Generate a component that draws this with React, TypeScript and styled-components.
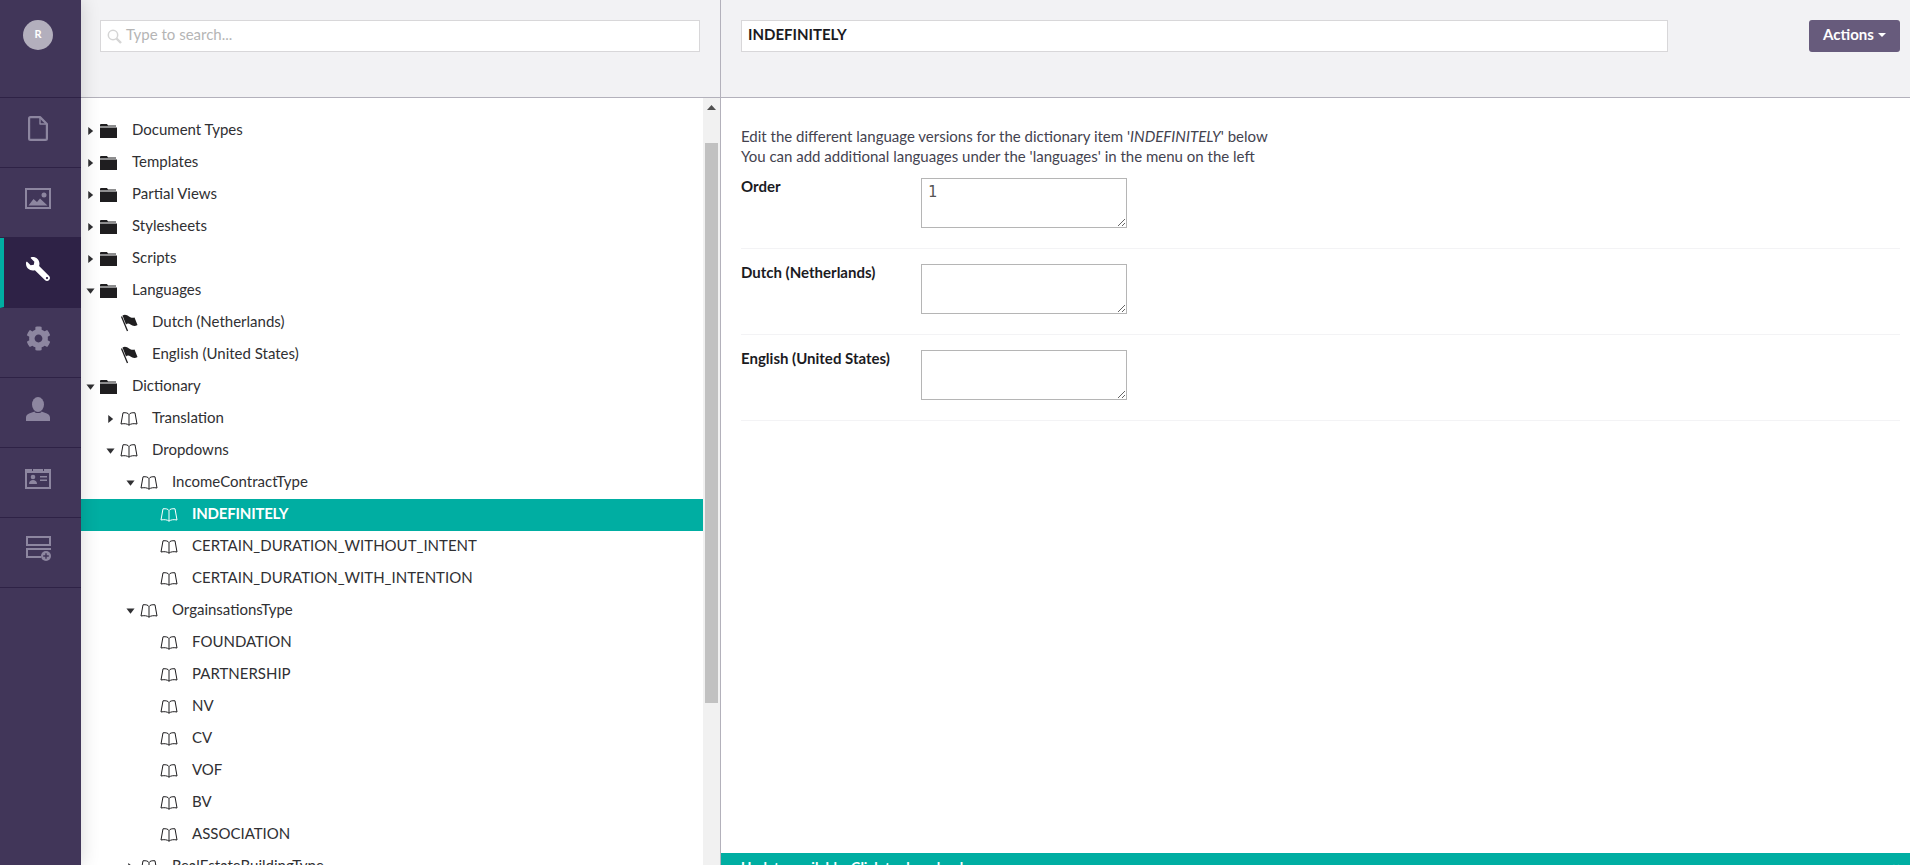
import { FaCog, FaWrench } from 'react-icons/fa';
import styled, { createGlobalStyle } from 'styled-components';

const GlobalStyle = createGlobalStyle`
  html, body {
    margin: 0;
    height: 100%;
    overflow: hidden;
    background: #fff;
  }
  * {
    box-sizing: border-box;
  }
`;

const Page = styled.div`
  display: flex;
  width: 100vw;
  height: 100vh;
  overflow: hidden;
  font-family: Lato, 'Liberation Sans', sans-serif;
  font-size: 15px;
  color: #303033;
`;

const Sidebar = styled.nav`
  position: relative;
  z-index: 2;
  flex: 0 0 81px;
  background: #413659;
  box-shadow: 0 0 18px rgba(0, 0, 0, 0.16);
`;

const AvatarSection = styled.div`
  height: 98px;
  padding: 20px 5px 0 0;
  display: flex;
  justify-content: center;
  align-items: flex-start;
  border-bottom: 1px solid #2e2246;
`;

const Avatar = styled.div`
  width: 30px;
  height: 30px;
  padding-bottom: 3px;
  border-radius: 50%;
  background: #b3afbd;
  color: #fff;
  font-size: 11px;
  font-weight: 700;
  display: flex;
  align-items: center;
  justify-content: center;
`;

const NavItem = styled.div<{ $active?: boolean }>`
  height: 70px;
  display: flex;
  align-items: center;
  justify-content: center;
  padding: 0 ${(p) => (p.$active ? '9px' : '5px')} 8px 0;
  color: ${(p) => (p.$active ? '#fff' : '#8d86a0')};
  background: ${(p) => (p.$active ? '#2e2246' : 'transparent')};
  border-left: ${(p) => (p.$active ? '4px solid #00aea2' : '0')};
  border-bottom: 1px solid #2e2246;
`;

const TreePane = styled.section`
  flex: 0 0 640px;
  display: flex;
  flex-direction: column;
  border-right: 1px solid #b3b1bb;
  min-height: 0;
`;

const PaneHeader = styled.header`
  flex: 0 0 98px;
  background: #f2f2f4;
  border-bottom: 1px solid #b3b1bb;
  padding: 20px 0 0 19px;
`;

const SearchBox = styled.div`
  width: 600px;
  height: 32px;
  padding: 0 0 0 6px;
  background: #fff;
  border: 1px solid #d8d7d9;
  display: flex;
  align-items: center;
  gap: 4px;
  color: #b5b5b5;
`;

const SearchText = styled.span`
  margin-bottom: 5px;
`;

const TreeBody = styled.div`
  flex: 1;
  min-height: 0;
  display: flex;
  overflow: hidden;
`;

const Tree = styled.ul`
  flex: 1;
  list-style: none;
  margin: 0;
  padding: 17px 0 0;
  overflow: hidden;
`;

const Row = styled.li<{ $level: number; $selected?: boolean }>`
  height: 32px;
  display: flex;
  align-items: center;
  padding-left: ${(p) => 5 + p.$level * 20}px;
  background: ${(p) => (p.$selected ? '#00aea2' : 'transparent')};
  color: ${(p) => (p.$selected ? '#fff' : '#303033')};
  font-weight: ${(p) => (p.$selected ? 700 : 400)};
  letter-spacing: ${(p) => (p.$selected ? '-0.2px' : '0')};
  white-space: nowrap;
`;

const RowLabel = styled.span`
  margin-bottom: 5px;
`;

const Caret = styled.span<{ $open?: boolean; $hidden?: boolean }>`
  flex: 0 0 9px;
  height: 8px;
  margin-right: 5px;
  visibility: ${(p) => (p.$hidden ? 'hidden' : 'visible')};
  background: #303033;
  clip-path: ${(p) =>
    p.$open ? 'polygon(5% 20%, 95% 20%, 50% 85%)' : 'polygon(25% 0, 80% 50%, 25% 100%)'};
`;

const RowIcon = styled.span<{ $selected?: boolean }>`
  flex: 0 0 32px;
  display: flex;
  align-items: center;
  color: ${(p) => (p.$selected ? '#fff' : '#1f1e20')};
`;

const ScrollTrack = styled.div`
  flex: 0 0 17px;
  background: #f1f1f1;
  display: flex;
  flex-direction: column;
  align-items: center;
`;

const ScrollArrow = styled.div`
  margin-top: 7px;
  width: 9px;
  height: 5px;
  background: #505050;
  clip-path: polygon(50% 0, 100% 100%, 0 100%);
`;

const ScrollThumb = styled.div`
  margin-top: 33px;
  width: 13px;
  height: 560px;
  background: #c1c1c1;
`;

const EditorPane = styled.main`
  flex: 1;
  min-width: 0;
  display: flex;
  flex-direction: column;
`;

const EditorHeader = styled.header`
  flex: 0 0 98px;
  background: #f2f2f4;
  border-bottom: 1px solid #b3b1bb;
  display: flex;
  align-items: flex-start;
  justify-content: space-between;
  padding: 20px 10px 0 20px;
`;

const NameInput = styled.input`
  width: 927px;
  height: 32px;
  padding: 0 6px 5px;
  border: 1px solid #d8d7d9;
  background: #fff;
  font-family: inherit;
  font-size: 15px;
  font-weight: 700;
  color: #1b1b1f;
  outline: none;
`;

const ActionsButton = styled.button`
  width: 91px;
  height: 32px;
  padding: 0 0 5px;
  border: 0;
  border-radius: 3px;
  background: #675b7c;
  color: #fff;
  font-family: inherit;
  font-size: 15px;
  font-weight: 700;
  display: flex;
  align-items: center;
  justify-content: center;
  gap: 4px;
`;

const ActionsCaret = styled.span`
  width: 0;
  height: 0;
  border-left: 4px solid transparent;
  border-right: 4px solid transparent;
  border-top: 4px solid #fff;
  margin-top: 2px;
`;

const EditorBody = styled.div`
  flex: 1;
  min-height: 0;
  padding: 28px 10px 0 20px;
  overflow: hidden;
`;

const Intro = styled.p`
  margin: 0 0 12px;
  line-height: 20px;
  color: #44434f;
`;

const Fields = styled.div`
  display: flex;
  flex-direction: column;
`;

const Field = styled.div<{ $first?: boolean }>`
  display: flex;
  align-items: flex-start;
  padding-top: ${(p) => (p.$first ? '0' : '15px')};
  height: ${(p) => (p.$first ? '71px' : '86px')};
  border-bottom: 1px solid #f3f3f5;
`;

const FieldLabel = styled.label`
  flex: 0 0 180px;
  margin-top: -2px;
  font-weight: 700;
  line-height: 20px;
  color: #1b1b1f;
`;

const FieldText = styled.textarea`
  display: block;
  width: 206px;
  height: 50px;
  margin: 0;
  padding: 3px 6px;
  border: 1px solid #b5b5b5;
  background: #fff;
  font-family: 'DejaVu Sans Mono', monospace;
  font-size: 15px;
  line-height: 20px;
  color: #555;
  outline: none;
`;

const UpdateBar = styled.footer`
  flex: 0 0 12px;
  background: #00aea2;
  color: #fff;
  font-weight: 700;
  font-size: 14px;
  line-height: 20px;
  padding: 4px 10px 0 20px;
  overflow: hidden;
  display: flex;
  justify-content: space-between;
`;

const CloseMark = styled.span`
  color: #7fd6d0;
`;

const Folder = () => (
  <svg width="17" height="14" viewBox="0 0 17 14" fill="currentColor">
    <path d="M1 0h6l1 1.5h8v1H0V1a1 1 0 0 1 1-1zM0 3.5h17V14H0z" />
  </svg>
);

const Book = () => (
  <svg width="18" height="14" viewBox="0 0 18 14" fill="none" stroke="currentColor" strokeWidth="1">
    <path d="M9 2.5C8 1 6 .5 3 .8L1 12c2.800-.6 6.200-.5 8 1.200 1.800-1.700 5.200-1.800 8-1.200L15 .8c-3-.3-5 .2-6 1.700zM9 2.500v10.700" />
  </svg>
);

const Flag = () => (
  <svg width="18" height="18" viewBox="0 0 18 18" fill="currentColor">
    <path d="M1.500 2.500L7.500 17" stroke="currentColor" strokeWidth="1.300" fill="none" />
    <path d="M2.500 1.500C5 0 7 1 9 2.500c2 1.500 4 1.300 5.500 1l3 7.500c-2.500 1.500-5 1-7-.5-2-1.500-3.500-1-4.500 0z" />
  </svg>
);

const SearchIcon = () => (
  <svg width="15" height="15" viewBox="0 0 15 15" fill="none" stroke="#d5d5d5" strokeWidth="1.5">
    <circle cx="6" cy="6" r="4.700" />
    <path d="M9.500 9.500L14 14" strokeWidth="2.400" />
  </svg>
);

const DocumentIcon = () => (
  <svg width="20" height="25" viewBox="0 0 20 25" fill="none" stroke="currentColor" strokeWidth="2.200" strokeLinejoin="round">
    <path d="M1.100 2.500a1.400 1.400 0 0 1 1.400-1.400H12L18.900 8v14.500a1.400 1.400 0 0 1-1.400 1.400h-15a1.400 1.400 0 0 1-1.400-1.400z" />
    <path d="M12 1.100V8h6.900" strokeWidth="1.400" />
  </svg>
);

const ImageIcon = () => (
  <svg width="26" height="21" viewBox="0 0 26 21" fill="currentColor">
    <path fillRule="evenodd" d="M0 0h26v21H0zM2 2v17h22V2z" />
    <circle cx="19" cy="7" r="2.500" />
    <path d="M3.500 17.500l5-6.500 3.500 3 3-3.500 7.500 7z" />
  </svg>
);

const UserIcon = () => (
  <svg width="24" height="24" viewBox="0 0 24 24" fill="currentColor">
    <ellipse cx="12" cy="7.500" rx="6" ry="7.500" />
    <path d="M8.500 14.500c0 2 7 2 7 0 3 1.500 8.500 2 8.500 6V24H0v-3.500c0-4 5.500-4.500 8.500-6z" />
  </svg>
);

const ContactIcon = () => (
  <svg width="26" height="20" viewBox="0 0 26 20" fill="currentColor">
    <path fillRule="evenodd" d="M0 0h7v2h1V0h10v2h1V0h7v20H0zM2 4v14h22V4z" />
    <circle cx="8" cy="8" r="2.300" />
    <path d="M4 15c0-3 2-4 4-4s4 1 4 4zM15 7h7v1.500h-7zM15 10.500h7V12h-7z" />
  </svg>
);

const ServersIcon = () => (
  <svg width="25" height="25" viewBox="0 0 25 25" fill="none" stroke="currentColor" strokeWidth="2">
    <rect x="1" y="1" width="23" height="8" />
    <path d="M15 21H1v-8h23v1" />
    <circle cx="20" cy="20" r="5" fill="currentColor" stroke="none" />
    <path d="M20 17.200v5.600M17.200 20h5.600" stroke="#413659" strokeWidth="1.400" />
  </svg>
);

type TreeRow = {
  label: string;
  level: number;
  icon: 'folder' | 'book' | 'flag';
  caret?: 'open' | 'closed';
  selected?: boolean;
};

const rows: TreeRow[] = [
  { label: 'Document Types', level: 0, icon: 'folder', caret: 'closed' },
  { label: 'Templates', level: 0, icon: 'folder', caret: 'closed' },
  { label: 'Partial Views', level: 0, icon: 'folder', caret: 'closed' },
  { label: 'Stylesheets', level: 0, icon: 'folder', caret: 'closed' },
  { label: 'Scripts', level: 0, icon: 'folder', caret: 'closed' },
  { label: 'Languages', level: 0, icon: 'folder', caret: 'open' },
  { label: 'Dutch (Netherlands)', level: 1, icon: 'flag' },
  { label: 'English (United States)', level: 1, icon: 'flag' },
  { label: 'Dictionary', level: 0, icon: 'folder', caret: 'open' },
  { label: 'Translation', level: 1, icon: 'book', caret: 'closed' },
  { label: 'Dropdowns', level: 1, icon: 'book', caret: 'open' },
  { label: 'IncomeContractType', level: 2, icon: 'book', caret: 'open' },
  { label: 'INDEFINITELY', level: 3, icon: 'book', selected: true },
  { label: 'CERTAIN_DURATION_WITHOUT_INTENT', level: 3, icon: 'book' },
  { label: 'CERTAIN_DURATION_WITH_INTENTION', level: 3, icon: 'book' },
  { label: 'OrgainsationsType', level: 2, icon: 'book', caret: 'open' },
  { label: 'FOUNDATION', level: 3, icon: 'book' },
  { label: 'PARTNERSHIP', level: 3, icon: 'book' },
  { label: 'NV', level: 3, icon: 'book' },
  { label: 'CV', level: 3, icon: 'book' },
  { label: 'VOF', level: 3, icon: 'book' },
  { label: 'BV', level: 3, icon: 'book' },
  { label: 'ASSOCIATION', level: 3, icon: 'book' },
  { label: 'RealEstateBuildingType', level: 2, icon: 'book', caret: 'closed' },
];

const treeIcons = { folder: <Folder />, flag: <Flag />, book: <Book /> };

const App = () => {
  return (
    <Page>
      <GlobalStyle />
      <Sidebar>
        <AvatarSection>
          <Avatar>R</Avatar>
        </AvatarSection>
        <NavItem>
          <DocumentIcon />
        </NavItem>
        <NavItem>
          <ImageIcon />
        </NavItem>
        <NavItem $active>
          <FaWrench size={24} style={{ transform: 'scaleX(-1)' }} />
        </NavItem>
        <NavItem>
          <FaCog size={25} />
        </NavItem>
        <NavItem>
          <UserIcon />
        </NavItem>
        <NavItem>
          <ContactIcon />
        </NavItem>
        <NavItem>
          <ServersIcon />
        </NavItem>
      </Sidebar>

      <TreePane>
        <PaneHeader>
          <SearchBox>
            <SearchIcon />
            <SearchText>Type to search...</SearchText>
          </SearchBox>
        </PaneHeader>
        <TreeBody>
          <Tree>
            {rows.map((row) => (
              <Row key={row.label} $level={row.level} $selected={row.selected}>
                <Caret $open={row.caret === 'open'} $hidden={!row.caret} />
                <RowIcon $selected={row.selected}>{treeIcons[row.icon]}</RowIcon>
                <RowLabel>{row.label}</RowLabel>
              </Row>
            ))}
          </Tree>
          <ScrollTrack>
            <ScrollArrow />
            <ScrollThumb />
          </ScrollTrack>
        </TreeBody>
      </TreePane>

      <EditorPane>
        <EditorHeader>
          <NameInput defaultValue="INDEFINITELY" />
          <ActionsButton>
            Actions
            <ActionsCaret />
          </ActionsButton>
        </EditorHeader>
        <EditorBody>
          <Intro>
            Edit the different language versions for the dictionary item '<i>INDEFINITELY</i>' below
            <br />
            You can add additional languages under the 'languages' in the menu on the left
          </Intro>
          <Fields>
            <Field $first>
              <FieldLabel>Order</FieldLabel>
              <FieldText defaultValue="1" />
            </Field>
            <Field>
              <FieldLabel>Dutch (Netherlands)</FieldLabel>
              <FieldText />
            </Field>
            <Field>
              <FieldLabel>English (United States)</FieldLabel>
              <FieldText />
            </Field>
          </Fields>
        </EditorBody>
        <UpdateBar>
          Update available. Click to download
          <CloseMark>×</CloseMark>
        </UpdateBar>
      </EditorPane>
    </Page>
  );
};

export default App;
